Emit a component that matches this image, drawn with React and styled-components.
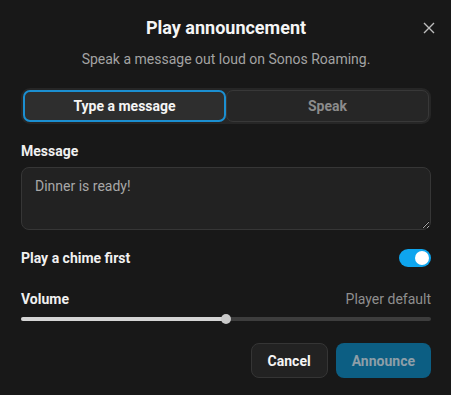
import React, { useState } from 'react';
import styled, { createGlobalStyle } from 'styled-components';

const GlobalStyle = createGlobalStyle`
  html, body {
    margin: 0;
    background: #181818;
    font-family: Roboto, "Liberation Sans", sans-serif;
    color: #f2f2f2;
  }
`;

const Dialog = styled.div`
  position: relative;
  box-sizing: border-box;
  width: 451px;
  height: 395px;
  padding: 16px 20px 0 21px;
  display: flex;
  flex-direction: column;
`;

const Title = styled.h2`
  margin: 0;
  font-size: 18px;
  line-height: 24px;
  font-weight: 700;
  text-align: center;
  color: #f5f5f5;
`;

const Subtitle = styled.p`
  margin: 10px 0 0;
  font-size: 14px;
  line-height: 18px;
  text-align: center;
  color: #a3a3a3;
`;

const CloseButton = styled.button`
  position: absolute;
  top: 20px;
  right: 14px;
  width: 16px;
  height: 16px;
  padding: 0;
  border: 0;
  background: none;
  color: #bdbdbd;
  display: flex;
  align-items: center;
  justify-content: center;
`;

const Tabs = styled.div`
  margin-top: 20px;
  display: grid;
  grid-template-columns: 1fr 1fr;
  padding: 2px;
  border-radius: 9px;
  background: #262626;
`;

const Tab = styled.button`
  height: 32px;
  border-radius: 7px;
  font-family: inherit;
  font-size: 14px;
  font-weight: 700;
  cursor: pointer;
  border: ${(p) => (p.$active ? '2px solid #1b8fd1' : '1px solid #383838')};
  background: ${(p) => (p.$active ? '#2e2e2e' : '#262626')};
  color: ${(p) => (p.$active ? '#f5f5f5' : '#8c8c8c')};
`;

const Label = styled.label`
  display: block;
  font-size: 14px;
  line-height: 18px;
  font-weight: 700;
  color: #f0f0f0;
`;

const Field = styled.div`
  margin-top: ${(p) => p.$top}px;
  display: flex;
  flex-direction: column;
  gap: 7px;
`;

const TextArea = styled.textarea`
  box-sizing: border-box;
  width: 100%;
  height: 63px;
  padding: 9px 13px;
  border: 1px solid #363636;
  border-radius: 8px;
  background: #222222;
  color: #a8a8a8;
  font-family: inherit;
  font-size: 14px;
  line-height: 18px;
  outline: none;
`;

const Row = styled.div`
  margin-top: ${(p) => p.$top}px;
  display: flex;
  align-items: center;
  justify-content: space-between;
`;

const Hint = styled.span`
  font-size: 14px;
  color: #8f8f8f;
`;

const Switch = styled.button`
  position: relative;
  width: 32px;
  height: 18px;
  padding: 0;
  border: 0;
  border-radius: 9px;
  background: ${(p) => (p.$on ? '#0ea5ee' : '#444')};
  cursor: pointer;

  &::after {
    content: '';
    position: absolute;
    top: 2px;
    left: ${(p) => (p.$on ? '16px' : '2px')};
    width: 14px;
    height: 14px;
    border-radius: 50%;
    background: #ffffff;
  }
`;

const Track = styled.div`
  position: relative;
  margin-top: 9px;
  height: 4px;
  border-radius: 2px;
  background: #3d3d3d;
`;

const Fill = styled.div`
  height: 100%;
  border-radius: 2px;
  background: #d4d4d4;
`;

const Thumb = styled.div`
  position: absolute;
  top: -3px;
  width: 10px;
  height: 10px;
  margin-left: -5px;
  border-radius: 50%;
  background: #c9c9c9;
`;

const Footer = styled.div`
  margin-top: 22px;
  display: flex;
  justify-content: flex-end;
  gap: 8px;
`;

const Button = styled.button`
  box-sizing: border-box;
  height: 35px;
  padding: 0 16px;
  border-radius: 8px;
  font-family: inherit;
  font-size: 14px;
  font-weight: 700;
  cursor: pointer;
  border: ${(p) => (p.$primary ? '0' : '1px solid #353535')};
  background: ${(p) => (p.$primary ? '#0c5e83' : '#222222')};
  color: ${(p) => (p.$primary ? '#8e9ea8' : '#f5f5f5')};
  min-width: ${(p) => (p.$primary ? '95px' : '77px')};
`;

export default function App() {
  const [mode, setMode] = useState('type');
  const [chime, setChime] = useState(true);
  const volume = 50;

  return (
    <>
      <GlobalStyle />
      <Dialog>
        <Title>Play announcement</Title>
        <Subtitle>Speak a message out loud on Sonos Roaming.</Subtitle>
        <CloseButton aria-label="Close">
          <svg width="12" height="12" viewBox="0 0 12 12">
            <path d="M1 1L11 11M11 1L1 11" stroke="currentColor" strokeWidth="1.4" />
          </svg>
        </CloseButton>

        <Tabs>
          <Tab $active={mode === 'type'} onClick={() => setMode('type')}>
            Type a message
          </Tab>
          <Tab $active={mode === 'speak'} onClick={() => setMode('speak')}>
            Speak
          </Tab>
        </Tabs>

        <Field $top={18}>
          <Label>Message</Label>
          <TextArea defaultValue="Dinner is ready!" />
        </Field>

        <Row $top={19}>
          <Label>Play a chime first</Label>
          <Switch $on={chime} onClick={() => setChime(!chime)} />
        </Row>

        <Row $top={23}>
          <Label>Volume</Label>
          <Hint>Player default</Hint>
        </Row>
        <Track>
          <Fill style={{ width: `${volume}%` }} />
          <Thumb style={{ left: `${volume}%` }} />
        </Track>

        <Footer>
          <Button>Cancel</Button>
          <Button $primary>Announce</Button>
        </Footer>
      </Dialog>
    </>
  );
}
